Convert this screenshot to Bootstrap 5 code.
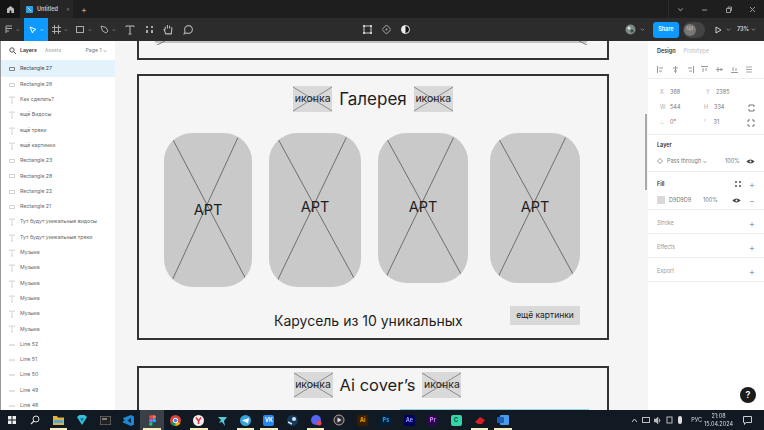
<!DOCTYPE html>
<html lang="en">
  <head>
    <meta charset="UTF-8" />
    <meta name="viewport" content="width=device-width, initial-scale=1.0" />
    <title>Untitled</title>
    <link href="https://cdn.jsdelivr.net/npm/bootstrap@5.3.0/dist/css/bootstrap.min.css" rel="stylesheet" />
    <style>
      html, body { width: 764px; height: 430px; overflow: hidden; }
      body { font-family: Inter, "Liberation Sans", sans-serif; background: #1e1e1e; color: #333; }
      svg { display: block; flex: none; }
      .shell { width: 764px; height: 430px; filter: blur(0.3px); }

      /* figma chrome */
      .title-bar { height: 18px; background: #1e1e1e; color: #c8c8c8; font-size: 5.5px; }
      .home-tab { width: 20px; height: 18px; background: #141414; }
      .file-tab { width: 53px; height: 18px; background: #262626; gap: 4px; padding-left: 6px; font-weight: 600; }
      .tab-plus { font-size: 9px; line-height: 1; color: #aaa; margin-left: 8px; }
      .win-btns { margin-left: auto; width: 96px; height: 18px; border-left: 1px solid #2c2c2c; padding: 0 8px; }
      .tool-bar { height: 23px; background: #2c2c2c; }
      .tool-btn { height: 23px; gap: 3px; width: 24px; }
      .tool-btn.slim { width: 19.5px; }
      .tool-btn.active { background: #0d99ff; }
      .mid-tools { margin-left: 165px; gap: 10px; }
      .share-btn { width: 26px; height: 16px; background: #0d99ff; color: #fff; font-size: 5.5px; font-weight: 600; border-radius: 3px; }
      .user-pill { width: 22px; height: 16px; border-radius: 8px; background: #444; padding-left: 1px; }
      .user-dot { width: 12px; height: 12px; border-radius: 50%; background: #777; color: #ddd; font-size: 4.5px; }
      .play-gap { margin-left: 10px; }
      .zoom-txt { color: #ddd; font-size: 5.5px; font-weight: 600; margin: 0 2px; }

      /* left panel */
      .layers { width: 115px; flex-shrink: 0; background: #fff; border-left: 1px solid #999; overflow: hidden; font-size: 5.2px; color: #666; }
      .layers-head { height: 19px; padding: 0 8px; gap: 4px; }
      .layers-head b { color: #333; font-weight: 600; margin-right: 4px; }
      .layers-head span { color: #aaa; }
      .layers-head .page-pick { color: #777; margin-left: auto; }
      .layer-row { height: 15.3px; padding-left: 6px; gap: 3px; white-space: nowrap; }
      .layer-row.picked { background: #e4f2fb; height: 17px; color: #444; }
      .layer-ic { width: 10px; height: 8px; color: #c6c6c6; }
      .picked .layer-ic { color: #666; }

      /* canvas */
      .board { flex: 1; background: #f5f5f5; overflow: hidden; }
      .sheet { position: absolute; left: 22px; width: 472px; border: 2px solid #333; background: #f5f5f5; }
      .sheet-one { top: -100px; height: 119px; }
      .sheet-two { top: 33px; height: 266px; }
      .sheet-three { top: 325px; height: 200px; }
      .sheet-line { position: absolute; left: 16px; right: 20px; bottom: 15px; height: 2px; background: #c4c4c4; }
      .sheet-tip { position: absolute; bottom: 13px; width: 10px; height: 4px; }
      .tip-left { left: 17px; }
      .tip-right { right: 19px; }
      .sheet-head { gap: 7px; color: #1e1e1e; font-size: 17px; line-height: 26px; padding-top: 10px; }
      .sheet-three .sheet-head { padding: 4px 0 0 9px; font-size: 16.5px; }
      .ph-icon { width: 39px; height: 26px; background: #d9d9d9; font-size: 10.5px; line-height: 26px; text-align: center; }
      .ph-icon svg, .art-box svg { position: absolute; inset: 0; width: 100%; height: 100%; }
      .ph-icon span, .art-box span { position: relative; }
      .art-row { padding: 21px 0 0 25px; }
      .art-box { background: #c9c9c9; border-radius: 28px; font-size: 14.5px; color: #1e1e1e; overflow: hidden; }
      .art-a { width: 88px; height: 154px; margin-right: 17px; }
      .art-b { width: 92px; height: 154px; margin-right: 17px; padding-bottom: 6px; }
      .art-c { width: 90px; height: 150px; margin-right: 22px; padding-bottom: 2px; }
      .art-d { width: 90px; height: 150px; padding-bottom: 2px; }
      .sheet-foot { position: absolute; left: 135px; top: 232px; font-size: 14px; line-height: 26px; color: #1e1e1e; white-space: nowrap; }
      .more-btn { position: absolute; left: 371px; top: 230px; width: 70px; height: 19px; background: #d9d9d9; font-size: 8.500px; line-height: 19px; color: #222; text-align: center; }
      .cyan-line { position: absolute; left: 261px; top: 41px; width: 189px; height: 2px; background: #8fd3ea; }
      .scroll-thumb { position: absolute; right: 1px; top: 73px; width: 2px; height: 76px; background: #aaa; }

      /* right panel */
      .props { width: 116px; flex-shrink: 0; background: #fff; font-size: 5.500px; color: #888; overflow: hidden; }
      .help-dot { position: absolute; left: 92px; top: 346px; width: 16px; height: 16px; border-radius: 50%; background: #1b1b1b; color: #fff; font-size: 9px; font-weight: 600; }
      .prop-sect { border-bottom: 1px solid #eee; padding: 0 9px 0 9px; }
      .prop-sect b { color: #333; font-weight: 600; }
      .sect-tabs { height: 38px; }
      .tabs-top { height: 20px; gap: 8px; }
      .tabs-top b { color: #333; }
      .tabs-top span { color: #bbb; }
      .align-row { height: 17px; color: #999; }
      .sect-geo { height: 56px; padding-top: 6px; }
      .geo-row { height: 15px; color: #777; padding-left: 3px; }
      .geo-cell { width: 46px; gap: 5px; }
      .geo-cell i { color: #aaa; font-style: normal; width: 5px; }
      .sect-layer { height: 37px; }
      .sect-fill { height: 38px; padding-top: 2px; }
      .sect-line { height: 24px; color: #999; padding-top: 3px; }
      .prop-head { height: 20px; }
      .prop-row { height: 12px; color: #777; }
      .pass-mode { width: 58px; }
      .fill-hex { width: 34px; margin-left: 4px; }
      .swatch { width: 8px; height: 8px; background: #d9d9d9; }
      .plus { color: #999; font-size: 9px; line-height: 1; }

      /* windows taskbar */
      .task-bar { height: 20px; background: #111922; color: #ddd; font-size: 5.500px; }
      .task-ic { width: 23.4px; height: 20px; position: relative; }
      .task-ic.open::after { content: ""; position: absolute; left: 3px; right: 3px; bottom: 0; height: 2px; background: #f3efc0; }
      .task-ic.now { background: #3a4047; }
      .tray { margin-left: auto; gap: 4px; padding-right: 12px; }
      .clock { text-align: center; line-height: 8px; margin: 0 6px 0 -2px; }
      .app-sq { width: 11px; height: 11px; border-radius: 2px; font-size: 5.500px; font-weight: 700; line-height: 11px; text-align: center; }
      .app-vk { background: #2787f5; color: #fff; }
      .app-ai { background: #3a1e00; color: #ff9a00; }
      .app-ps { background: #001e36; color: #31a8ff; }
      .app-ae { background: #00005b; color: #9999ff; }
      .app-pr { background: #2a0a4a; color: #e08bff; }
      .app-cp { background: #33d6a6; color: #0b3b30; }
    </style>
  </head>

  <body>
    <svg width="0" height="0" class="position-absolute">
      <symbol id="cross" viewBox="0 0 100 100" preserveAspectRatio="none">
        <path d="M0 4 100 96M100 4 0 96" fill="none" stroke="#8a8a8a" stroke-width="1" vector-effect="non-scaling-stroke" />
      </symbol>
      <symbol id="artcross" viewBox="0 0 100 100" preserveAspectRatio="none">
        <path d="M9 3 94 96M84 3 9 96" fill="none" stroke="#6e6e6e" stroke-width="1" vector-effect="non-scaling-stroke" />
      </symbol>
      <symbol id="chev" viewBox="0 0 6 6"><path d="M1 2l2 2 2-2" fill="none" stroke="currentColor" /></symbol>
      <symbol id="eye" viewBox="0 0 10 6"><path d="M0 3q5-5 10 0-5 5-10 0z" fill="#444" /><circle cx="5" cy="3" r="1.2" fill="#fff" /></symbol>
      <symbol id="lay-rect" viewBox="0 0 10 8"><path d="M2.500 2.500h5v3h-5z" fill="none" stroke="currentColor" stroke-width=".8" /></symbol>
      <symbol id="lay-text" viewBox="0 0 10 8"><path d="M2.500 2V1h5v1M5 1v6M4 7h2" fill="none" stroke="currentColor" stroke-width=".7" /></symbol>
      <symbol id="lay-line" viewBox="0 0 10 8"><path d="M2 4h6" stroke="currentColor" /></symbol>
    </svg>

    <div class="shell d-flex flex-column">
      <div class="title-bar d-flex align-items-center">
        <div class="home-tab d-flex align-items-center justify-content-center">
          <svg width="7" height="7" viewBox="0 0 8 8"><path d="M4 0 8 3v5H5V5H3v3H0V3z" fill="#bbb" /></svg>
        </div>
        <div class="file-tab d-flex align-items-center">
          <svg width="7" height="7" viewBox="0 0 8 8"><rect width="8" height="8" rx="1" fill="#2d9fe8" /><path d="M2 2l4 4" stroke="#cfe" /></svg>
          <span>Untitled</span>
          <span class="ms-1 text-secondary">×</span>
        </div>
        <span class="tab-plus">+</span>
        <div class="win-btns d-flex align-items-center justify-content-between">
          <svg width="7" height="7" color="#777"><use href="#chev" /></svg>
          <svg width="7" height="7"><path d="M1 4h5" stroke="#999" /></svg>
          <svg width="7" height="7"><path d="M1.500 2.500h4v4h-4zM3 2.500V1h3.500v3.500H5.500" fill="none" stroke="#999" /></svg>
          <svg width="7" height="7"><path d="M1 1l5 5M6 1 1 6" stroke="#999" /></svg>
        </div>
      </div>

      <div class="tool-bar d-flex align-items-center text-white-50">
        <div class="tool-btn d-flex align-items-center justify-content-center">
          <svg width="8" height="9" viewBox="0 0 8 9"><path d="M1 1h6M1 3.500h6M1 6h3M1 1v7" stroke="#aaa" /></svg>
          <svg width="4" height="4" color="#999"><use href="#chev" /></svg>
        </div>
        <div class="tool-btn active d-flex align-items-center justify-content-center">
          <svg width="8" height="8" viewBox="0 0 8 8"><path d="M1 1l6 2.500-2.500 1L3.500 7z" fill="none" stroke="#fff" /></svg>
          <svg width="4" height="4" color="#fff"><use href="#chev" /></svg>
        </div>
        <div class="tool-btn d-flex align-items-center justify-content-center">
          <svg width="9" height="9" viewBox="0 0 9 9"><path d="M2.500 0v9M6.500 0v9M0 2.500h9M0 6.500h9" stroke="#aaa" /></svg>
          <svg width="4" height="4" color="#999"><use href="#chev" /></svg>
        </div>
        <div class="tool-btn d-flex align-items-center justify-content-center">
          <svg width="9" height="9"><rect x=".5" y="1.500" width="7" height="6" fill="none" stroke="#aaa" /></svg>
          <svg width="4" height="4" color="#999"><use href="#chev" /></svg>
        </div>
        <div class="tool-btn d-flex align-items-center justify-content-center">
          <svg width="9" height="9" viewBox="0 0 9 9"><path d="M1 1l5 1.500L8 6 6 8 2.500 6z" fill="none" stroke="#aaa" /></svg>
          <svg width="4" height="4" color="#999"><use href="#chev" /></svg>
        </div>
        <div class="tool-btn slim d-flex align-items-center justify-content-center">
          <svg width="10" height="10" viewBox="0 0 10 10"><path d="M1 2V1h8v1M5 1v8M3.500 9h3" fill="none" stroke="#bbb" /></svg>
        </div>
        <div class="tool-btn slim d-flex align-items-center justify-content-center">
          <svg width="9" height="9" viewBox="0 0 9 9"><path d="M1 1h2v2H1zM6 1h2v2H6zM1 5h2v3H1zM6 5h2v3H6z" fill="#aaa" /></svg>
        </div>
        <div class="tool-btn slim d-flex align-items-center justify-content-center">
          <svg width="11" height="11" viewBox="0 0 10 10"><path d="M2 5V2.500M4 4V1M6 4V1.500M8 5V3M2 5 1 5l1.500 4h5L8 5" fill="none" stroke="#bbb" /></svg>
        </div>
        <div class="tool-btn slim d-flex align-items-center justify-content-center">
          <svg width="10" height="10" viewBox="0 0 9 9"><path d="M1 8l.8-2.500a3.500 3.500 0 1 1 1.500 1.600z" fill="none" stroke="#aaa" /></svg>
        </div>

        <div class="mid-tools d-flex align-items-center">
          <svg width="9" height="9" viewBox="0 0 9 9"><path d="M1 1h7v7H1z" fill="none" stroke="#ccc" /><path d="M0 0h2v2H0zM7 0h2v2H7zM0 7h2v2H0zM7 7h2v2H7z" fill="#ccc" /></svg>
          <svg width="9" height="9" viewBox="0 0 9 9"><path d="M4.500 0 9 4.500 4.500 9 0 4.500z" fill="none" stroke="#aaa" /><circle cx="4.500" cy="4.500" r="1" fill="#aaa" /></svg>
          <svg width="9" height="9" viewBox="0 0 9 9"><circle cx="4.500" cy="4.500" r="4" fill="#111" stroke="#eee" /><path d="M4.500.5a4 4 0 0 1 0 8z" fill="#eee" transform="matrix(-1 0 0 1 9 0)" /></svg>
        </div>

        <div class="d-flex align-items-center ms-auto me-1">
          <svg width="11" height="11" viewBox="0 0 11 11"><circle cx="5.500" cy="5.500" r="5" fill="#7d8a84" /><circle cx="4" cy="4" r="1.500" fill="#dfe8e2" /><circle cx="7" cy="7" r="1.500" fill="#2f4b46" /></svg>
          <svg class="mx-1" width="5" height="5" color="#999"><use href="#chev" /></svg>
          <div class="share-btn d-flex align-items-center justify-content-center ms-1">Share</div>
          <div class="user-pill d-flex align-items-center ms-1">
            <div class="user-dot d-flex align-items-center justify-content-center">U/I</div>
          </div>
          <svg class="play-gap" width="7" height="8" viewBox="0 0 7 8"><path d="M1 1l5 3-5 3z" fill="none" stroke="#ccc" /></svg>
          <svg class="mx-1" width="5" height="5" color="#999"><use href="#chev" /></svg>
          <span class="zoom-txt">73%</span>
          <svg class="me-1" width="5" height="5" color="#999"><use href="#chev" /></svg>
        </div>
      </div>

      <div class="d-flex flex-grow-1 overflow-hidden">
        <aside class="layers">
          <div class="layers-head d-flex align-items-center">
            <svg width="7" height="7" viewBox="0 0 7 7"><circle cx="3" cy="3" r="2.200" fill="none" stroke="#555" /><path d="M4.500 4.500 7 7" stroke="#555" /></svg>
            <b>Layers</b>
            <span>Assets</span>
            <span class="page-pick">Page 1 ⌄</span>
          </div>
          <div class="layer-row picked d-flex align-items-center"><svg class="layer-ic"><use href="#lay-rect" /></svg>Rectangle 27</div>
          <div class="layer-row d-flex align-items-center"><svg class="layer-ic"><use href="#lay-rect" /></svg>Rectangle 26</div>
          <div class="layer-row d-flex align-items-center"><svg class="layer-ic"><use href="#lay-text" /></svg>Как сделать?</div>
          <div class="layer-row d-flex align-items-center"><svg class="layer-ic"><use href="#lay-text" /></svg>ещё Видосы</div>
          <div class="layer-row d-flex align-items-center"><svg class="layer-ic"><use href="#lay-text" /></svg>ещё треки</div>
          <div class="layer-row d-flex align-items-center"><svg class="layer-ic"><use href="#lay-text" /></svg>ещё картинки</div>
          <div class="layer-row d-flex align-items-center"><svg class="layer-ic"><use href="#lay-rect" /></svg>Rectangle 23</div>
          <div class="layer-row d-flex align-items-center"><svg class="layer-ic"><use href="#lay-rect" /></svg>Rectangle 28</div>
          <div class="layer-row d-flex align-items-center"><svg class="layer-ic"><use href="#lay-rect" /></svg>Rectangle 22</div>
          <div class="layer-row d-flex align-items-center"><svg class="layer-ic"><use href="#lay-rect" /></svg>Rectangle 21</div>
          <div class="layer-row d-flex align-items-center"><svg class="layer-ic"><use href="#lay-text" /></svg>Тут будут уникальные видосы</div>
          <div class="layer-row d-flex align-items-center"><svg class="layer-ic"><use href="#lay-text" /></svg>Тут будут уникальные треки</div>
          <div class="layer-row d-flex align-items-center"><svg class="layer-ic"><use href="#lay-text" /></svg>Музыка</div>
          <div class="layer-row d-flex align-items-center"><svg class="layer-ic"><use href="#lay-text" /></svg>Музыка</div>
          <div class="layer-row d-flex align-items-center"><svg class="layer-ic"><use href="#lay-text" /></svg>Музыка</div>
          <div class="layer-row d-flex align-items-center"><svg class="layer-ic"><use href="#lay-text" /></svg>Музыка</div>
          <div class="layer-row d-flex align-items-center"><svg class="layer-ic"><use href="#lay-text" /></svg>Музыка</div>
          <div class="layer-row d-flex align-items-center"><svg class="layer-ic"><use href="#lay-text" /></svg>Музыка</div>
          <div class="layer-row d-flex align-items-center"><svg class="layer-ic"><use href="#lay-line" /></svg>Line 52</div>
          <div class="layer-row d-flex align-items-center"><svg class="layer-ic"><use href="#lay-line" /></svg>Line 51</div>
          <div class="layer-row d-flex align-items-center"><svg class="layer-ic"><use href="#lay-line" /></svg>Line 50</div>
          <div class="layer-row d-flex align-items-center"><svg class="layer-ic"><use href="#lay-line" /></svg>Line 49</div>
          <div class="layer-row d-flex align-items-center"><svg class="layer-ic"><use href="#lay-line" /></svg>Line 48</div>
        </aside>

        <main class="board position-relative">
          <div class="sheet sheet-one">
            <div class="sheet-line"></div>
            <svg class="sheet-tip tip-left" viewBox="0 0 10 4"><path d="M9 0 1 4" stroke="#777" /></svg>
            <svg class="sheet-tip tip-right" viewBox="0 0 10 4"><path d="M1 0 9 4" stroke="#777" /></svg>
          </div>

          <div class="sheet sheet-two">
            <div class="sheet-head d-flex justify-content-center">
              <div class="ph-icon position-relative"><svg><use href="#cross" /></svg><span>иконка</span></div>
              <span>Галерея</span>
              <div class="ph-icon position-relative"><svg><use href="#cross" /></svg><span>иконка</span></div>
            </div>
            <div class="art-row d-flex align-items-start">
              <div class="art-box art-a position-relative d-flex align-items-center justify-content-center"><svg><use href="#artcross" /></svg><span>APT</span></div>
              <div class="art-box art-b position-relative d-flex align-items-center justify-content-center"><svg><use href="#artcross" /></svg><span>APT</span></div>
              <div class="art-box art-c position-relative d-flex align-items-center justify-content-center"><svg><use href="#artcross" /></svg><span>APT</span></div>
              <div class="art-box art-d position-relative d-flex align-items-center justify-content-center"><svg><use href="#artcross" /></svg><span>APT</span></div>
            </div>
            <div class="sheet-foot">Карусель из 10 уникальных</div>
            <div class="more-btn">ещё картинки</div>
          </div>

          <div class="sheet sheet-three">
            <div class="sheet-head d-flex justify-content-center">
              <div class="ph-icon position-relative"><svg><use href="#cross" /></svg><span>иконка</span></div>
              <span>Ai cover’s</span>
              <div class="ph-icon position-relative"><svg><use href="#cross" /></svg><span>иконка</span></div>
            </div>
            <div class="cyan-line"></div>
          </div>

          <div class="scroll-thumb"></div>
        </main>

        <aside class="props position-relative">
          <div class="prop-sect sect-tabs">
            <div class="tabs-top d-flex align-items-center"><b>Design</b><span>Prototype</span></div>
            <div class="align-row d-flex align-items-center justify-content-between">
              <svg width="7" height="7"><path d="M.5 0v7M2 2h4M2 5h3" stroke="#999" /></svg>
              <svg width="7" height="7"><path d="M3.500 0v7M1 2h5M2 5h3" stroke="#999" /></svg>
              <svg width="7" height="7"><path d="M6.500 0v7M1 2h4M2 5h3" stroke="#999" /></svg>
              <svg width="7" height="7"><path d="M0 .5h7M2 2v4M5 2v3" stroke="#999" /></svg>
              <svg width="7" height="7"><path d="M0 3.500h7M2 1v5M5 2v3" stroke="#999" /></svg>
              <svg width="7" height="7"><path d="M0 6.500h7M2 1v4M5 2v3" stroke="#999" /></svg>
              <svg width="9" height="7"><path d="M0 1h6M0 3.500h6M0 6h6" stroke="#aaa" /></svg>
            </div>
          </div>

          <div class="prop-sect sect-geo">
            <div class="geo-row d-flex align-items-center">
              <div class="geo-cell d-flex"><i>X</i>368</div>
              <div class="geo-cell d-flex"><i>Y</i>2385</div>
            </div>
            <div class="geo-row d-flex align-items-center">
              <div class="geo-cell d-flex"><i>W</i>544</div>
              <div class="geo-cell d-flex"><i>H</i>334</div>
              <svg class="ms-auto" width="7" height="8"><path d="M1 3V1h5v2M1 5v2h5V5" fill="none" stroke="#777" /></svg>
            </div>
            <div class="geo-row d-flex align-items-center">
              <div class="geo-cell d-flex"><i>∟</i>0°</div>
              <div class="geo-cell d-flex"><i>⌜</i>31</div>
              <svg class="ms-auto" width="8" height="8"><path d="M1 3V1h2M5 1h2v2M7 5v2H5M3 7H1V5" fill="none" stroke="#777" /></svg>
            </div>
          </div>

          <div class="prop-sect sect-layer">
            <div class="prop-head d-flex align-items-center"><b>Layer</b></div>
            <div class="prop-row d-flex align-items-center">
              <svg class="me-1" width="6" height="6"><path d="M3 .5 5.500 3 3 5.500.5 3z" fill="none" stroke="#999" /></svg>
              <span class="pass-mode">Pass through ⌄</span>
              <span>100%</span>
              <svg class="ms-auto" width="9" height="5"><use href="#eye" /></svg>
            </div>
          </div>

          <div class="prop-sect sect-fill">
            <div class="prop-head d-flex align-items-center justify-content-between">
              <b>Fill</b>
              <div class="d-flex align-items-center gap-2">
                <svg width="6" height="6"><path d="M0 0h2v2H0zM4 0h2v2H4zM0 4h2v2H0zM4 4h2v2H4z" fill="#777" /></svg>
                <span class="plus">+</span>
              </div>
            </div>
            <div class="prop-row d-flex align-items-center">
              <div class="swatch"></div>
              <span class="fill-hex">D9D9D9</span>
              <span>100%</span>
              <svg class="ms-auto me-2" width="9" height="5"><use href="#eye" /></svg>
              <span class="plus">−</span>
            </div>
          </div>

          <div class="prop-sect sect-line d-flex align-items-center justify-content-between"><span>Stroke</span><span class="plus">+</span></div>
          <div class="prop-sect sect-line d-flex align-items-center justify-content-between"><span>Effects</span><span class="plus">+</span></div>
          <div class="prop-sect sect-line d-flex align-items-center justify-content-between"><span>Export</span><span class="plus">+</span></div>

          <div class="help-dot d-flex align-items-center justify-content-center">?</div>
        </aside>
      </div>

      <footer class="task-bar d-flex align-items-center">
        <div class="task-ic d-flex align-items-center justify-content-center"><svg width="8" height="8"><path d="M0 0h3.500v3.500H0zM4.500 0H8v3.500H4.500zM0 4.500h3.500V8H0zM4.500 4.500H8V8H4.500z" fill="#eee" /></svg></div>
        <div class="task-ic d-flex align-items-center justify-content-center"><svg width="10" height="10"><circle cx="6" cy="4" r="3" fill="none" stroke="#ddd" /><path d="M4 6 1 9" stroke="#ddd" stroke-width="1.200" /></svg></div>
        <div class="task-ic open d-flex align-items-center justify-content-center"><svg width="11" height="9"><path d="M0 0h4l1 1.500h6V9H0z" fill="#e3b23c" /><path d="M1 4h9v3H1z" fill="#5aa5d8" /></svg></div>
        <div class="task-ic d-flex align-items-center justify-content-center"><svg width="10" height="10"><path d="M0 2 2.500 0h5L10 2 5 10z" fill="#37bfe0" /><path d="M3 3h4L5 7z" fill="#127ea8" /></svg></div>
        <div class="task-ic d-flex align-items-center justify-content-center"><svg width="11" height="9"><rect width="11" height="9" fill="#222" stroke="#888" /><path d="M2 3h5" stroke="#ddd" /></svg></div>
        <div class="task-ic d-flex align-items-center justify-content-center"><svg width="11" height="11" viewBox="0 0 11 11"><path d="M8 0 11 1.500v8L8 11 0 7.500V6l2-.5-2-2V3z" fill="#1e88d8" /><path d="M8 2.800 4.500 5.500 8 8.200z" fill="#0b2b48" /></svg></div>
        <div class="task-ic now open d-flex align-items-center justify-content-center"><svg width="7" height="11" viewBox="0 0 6 9"><path d="M0 1.500A1.500 1.500 0 0 1 1.500 0H3v3H1.500A1.500 1.500 0 0 1 0 1.500z" fill="#f24e1e" /><path d="M3 0h1.500a1.500 1.500 0 0 1 0 3H3z" fill="#ff7262" /><path d="M0 4.500A1.500 1.500 0 0 1 1.500 3H3v3H1.500A1.500 1.500 0 0 1 0 4.500z" fill="#a259ff" /><circle cx="4.500" cy="4.500" r="1.500" fill="#1abcfe" /><path d="M0 7.500A1.500 1.500 0 0 1 1.500 6H3v1.500a1.500 1.500 0 0 1-3 0z" fill="#0acf83" /></svg></div>
        <div class="task-ic d-flex align-items-center justify-content-center"><svg width="11" height="11" viewBox="0 0 22 22"><circle cx="11" cy="11" r="11" fill="#db4437" /><path d="M11 11 1.500 16.500A11 11 0 0 0 11 22z" fill="#0f9d58" /><path d="M11 11 20.500 16.500A11 11 0 0 1 11 22z" fill="#f4b400" /><circle cx="11" cy="11" r="4.500" fill="#4285f4" stroke="#fff" stroke-width="2" /></svg></div>
        <div class="task-ic open d-flex align-items-center justify-content-center"><svg width="11" height="11"><circle cx="5.500" cy="5.500" r="5.500" fill="#f2f2f2" /><path d="M3 2.500l2.500 3.500v3M8 2.500 5.500 6" fill="none" stroke="#e0303a" stroke-width="1.500" /></svg></div>
        <div class="task-ic d-flex align-items-center justify-content-center"><svg width="11" height="11"><path d="M1 2h9L7 6l1 5-3-4-3 1 2-3z" fill="#58c9d8" /></svg></div>
        <div class="task-ic open d-flex align-items-center justify-content-center"><svg width="11" height="11"><circle cx="5.500" cy="5.500" r="5.500" fill="#36a5dd" /><path d="M2 5.500 9 3 8 8.500 5.500 7z" fill="#fff" /></svg></div>
        <div class="task-ic open d-flex align-items-center justify-content-center"><div class="app-sq app-vk">VK</div></div>
        <div class="task-ic d-flex align-items-center justify-content-center"><svg width="11" height="11"><circle cx="5.500" cy="5.500" r="5.500" fill="#133a5e" /><circle cx="7" cy="4" r="2" fill="#d5e4ee" /><path d="M1 7l4 2" stroke="#d5e4ee" stroke-width="1.500" /></svg></div>
        <div class="task-ic open d-flex align-items-center justify-content-center"><svg width="12" height="12"><circle cx="6" cy="6" r="5" fill="#5865f2" /><circle cx="9" cy="9" r="2.500" fill="#e84855" /></svg></div>
        <div class="task-ic d-flex align-items-center justify-content-center"><svg width="12" height="12"><circle cx="6" cy="6" r="5" fill="#2a2a38" stroke="#b9a890" /><path d="M4.500 3.500 8.500 6l-4 2.500z" fill="#e8e0d0" /></svg></div>
        <div class="task-ic d-flex align-items-center justify-content-center"><div class="app-sq app-ai">Ai</div></div>
        <div class="task-ic d-flex align-items-center justify-content-center"><div class="app-sq app-ps">Ps</div></div>
        <div class="task-ic d-flex align-items-center justify-content-center"><div class="app-sq app-ae">Ae</div></div>
        <div class="task-ic d-flex align-items-center justify-content-center"><div class="app-sq app-pr">Pr</div></div>
        <div class="task-ic d-flex align-items-center justify-content-center"><div class="app-sq app-cp">C</div></div>
        <div class="task-ic open d-flex align-items-center justify-content-center"><svg width="12" height="9"><path d="M1 6 6 1l5 3-3 4H4z" fill="#d31f26" /></svg></div>
        <div class="task-ic open d-flex align-items-center justify-content-center"><svg width="12" height="10"><rect x="3" width="9" height="10" rx="1" fill="#4a9be8" /><rect y="2" width="7" height="6" rx="1" fill="#1b5fb8" /></svg></div>

        <div class="tray d-flex align-items-center">
          <svg width="7" height="5"><path d="M1 4l2.500-3L6 4" fill="none" stroke="#ccc" /></svg>
          <svg width="8" height="7"><rect x=".5" y=".5" width="7" height="5" fill="none" stroke="#bbb" /></svg>
          <svg width="8" height="7"><path d="M0 2h2l2-2v7L2 5H0zM5 1.500q2 2 0 4" fill="#bbb" stroke="#bbb" stroke-width=".5" /></svg>
          <svg width="7" height="8"><rect x="1" y="1" width="5" height="6" fill="none" stroke="#bbb" /></svg>
          <svg width="6" height="8"><rect x="1" width="4" height="8" rx="2" fill="#ddd" /></svg>
          <span class="ms-1">РУС</span>
          <div class="clock">21:08<br />15.04.2024</div>
          <svg width="9" height="9"><path d="M.5.5h8v6H3L1.500 8.500V6.500h-1z" fill="none" stroke="#ccc" /></svg>
        </div>
      </footer>
    </div>

    <script src="https://cdn.jsdelivr.net/npm/bootstrap@5.3.0/dist/js/bootstrap.bundle.min.js"></script>
  </body>
</html>
